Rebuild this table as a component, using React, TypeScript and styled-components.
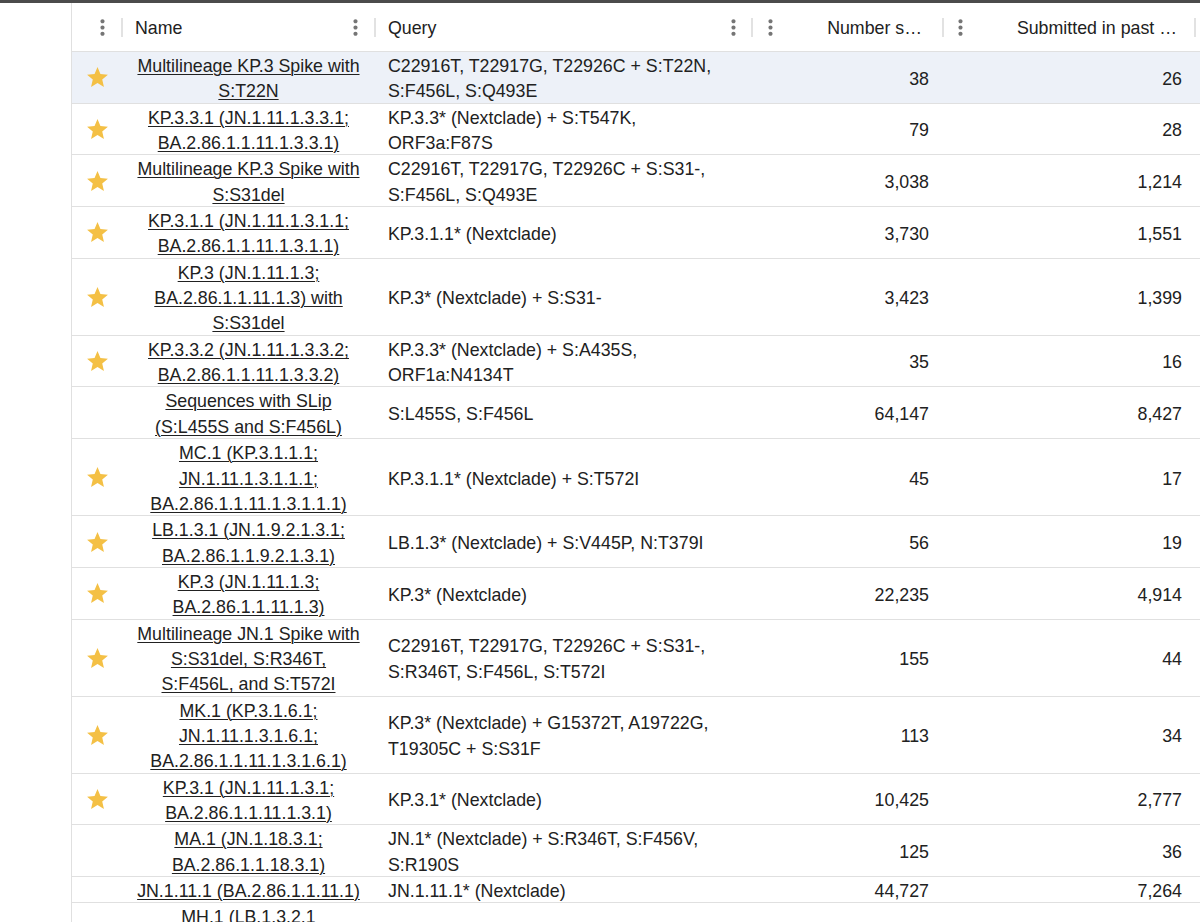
import React from "react";
import styled, { createGlobalStyle } from "styled-components";

const GlobalStyle = createGlobalStyle`
  html, body { margin: 0; padding: 0; background: #ffffff; }
  body {
    font-family: "Liberation Sans", Arial, Helvetica, sans-serif;
    color: #212121;
  }
  * { box-sizing: border-box; }
`;

const COLS = "50px 253px 377px 191px 252px 1fr";

const Page = styled.div`
  height: 100vh;
  display: flex;
  flex-direction: column;
  overflow: hidden;
`;

const TopBar = styled.div`
  height: 3px;
  flex-shrink: 0;
  background: #4b4b4b;
`;

const Content = styled.div`
  flex: 1;
  min-height: 0;
  display: flex;
  padding-left: 71px;
`;

const Grid = styled.div`
  flex: 1;
  min-width: 0;
  border-left: 1px solid #e0e0e0;
  overflow: hidden;
  display: flex;
  flex-direction: column;
  font-size: 17.8px;
`;

const HeaderRow = styled.div`
  display: grid;
  grid-template-columns: ${COLS};
  height: 49px;
  flex-shrink: 0;
  border-bottom: 1px solid #e0e0e0;
`;

const HeaderCell = styled.div<{ $padL?: number }>`
  display: flex;
  align-items: center;
  min-width: 0;
  padding-left: ${(p) => (p.$padL ?? 0)}px;
`;

const HeaderTitle = styled.span<{ $align: "left" | "right"; $gap?: number }>`
  flex: 1;
  min-width: 0;
  white-space: nowrap;
  overflow: hidden;
  color: #212121;
  padding-top: 2px;
  text-align: ${(p) => p.$align};
  margin-right: ${(p) => (p.$gap ?? 0)}px;
`;

const KebabBox = styled.span<{ $mr?: number }>`
  width: 25px;
  height: 25px;
  flex-shrink: 0;
  display: flex;
  align-items: center;
  justify-content: center;
  color: #757575;
  margin-right: ${(p) => (p.$mr ?? 0)}px;
`;

const Separator = styled.span`
  width: 2px;
  height: 19px;
  flex-shrink: 0;
  background: #e2e2e2;
  margin-right: -1px;
`;

const Row = styled.div<{ $selected?: boolean }>`
  display: grid;
  grid-template-columns: ${COLS};
  flex-shrink: 0;
  border-bottom: 1px solid #e0e0e0;
  background: ${(p) => (p.$selected ? "#edf1f8" : "#ffffff")};
  line-height: 25.35px;
`;

const StarCell = styled.div`
  display: flex;
  align-items: center;
  justify-content: center;
  padding-top: 1px;
`;

const NameCell = styled.div`
  display: flex;
  align-items: center;
  justify-content: center;
  text-align: center;
  padding: 0 6px;
  white-space: nowrap;
  overflow: hidden;
`;

const QueryCell = styled.div`
  display: flex;
  align-items: center;
  padding: 0 13px;
  white-space: nowrap;
  overflow: hidden;
`;

const NumCell = styled.div<{ $pr: number }>`
  display: flex;
  align-items: center;
  justify-content: flex-end;
  padding-right: ${(p) => p.$pr}px;
  white-space: nowrap;
`;

const CellText = styled.div`
  padding-top: 2px;
  margin-bottom: -2px;
`;

const NameLink = styled.a`
  color: #212121;
  text-decoration: underline;
  text-decoration-thickness: 1px;
  text-underline-offset: 2px;
  cursor: pointer;
`;

const Kebab = ({ mr }: { mr?: number }) => (
  <KebabBox $mr={mr}>
    <svg width="25" height="25" viewBox="0 0 24 24" fill="currentColor">
      <path d="M12 8c1.1 0 2-.9 2-2s-.9-2-2-2-2 .9-2 2 .9 2 2 2zm0 2c-1.1 0-2 .9-2 2s.9 2 2 2 2-.9 2-2-.9-2-2-2zm0 6c-1.1 0-2 .9-2 2s.9 2 2 2 2-.9 2-2-.9-2-2-2z" />
    </svg>
  </KebabBox>
);

const Star = () => (
  <svg width="25" height="25" viewBox="0 0 24 24" fill="#f4c045">
    <path d="M12 17.27 18.18 21l-1.64-7.03L22 9.24l-7.19-.61L12 2 9.19 8.63 2 9.24l5.46 4.73L5.82 21z" />
  </svg>
);

type Item = {
  star: boolean;
  name: string[];
  query: string[];
  num: string;
  past: string;
};

const rows: Item[] = [
  { star: true, name: ["Multilineage KP.3 Spike with", "S:T22N"], query: ["C22916T, T22917G, T22926C + S:T22N,", "S:F456L, S:Q493E"], num: "38", past: "26" },
  { star: true, name: ["KP.3.3.1 (JN.1.11.1.3.3.1;", "BA.2.86.1.1.11.1.3.3.1)"], query: ["KP.3.3* (Nextclade) + S:T547K,", "ORF3a:F87S"], num: "79", past: "28" },
  { star: true, name: ["Multilineage KP.3 Spike with", "S:S31del"], query: ["C22916T, T22917G, T22926C + S:S31-,", "S:F456L, S:Q493E"], num: "3,038", past: "1,214" },
  { star: true, name: ["KP.3.1.1 (JN.1.11.1.3.1.1;", "BA.2.86.1.1.11.1.3.1.1)"], query: ["KP.3.1.1* (Nextclade)"], num: "3,730", past: "1,551" },
  { star: true, name: ["KP.3 (JN.1.11.1.3;", "BA.2.86.1.1.11.1.3) with", "S:S31del"], query: ["KP.3* (Nextclade) + S:S31-"], num: "3,423", past: "1,399" },
  { star: true, name: ["KP.3.3.2 (JN.1.11.1.3.3.2;", "BA.2.86.1.1.11.1.3.3.2)"], query: ["KP.3.3* (Nextclade) + S:A435S,", "ORF1a:N4134T"], num: "35", past: "16" },
  { star: false, name: ["Sequences with SLip", "(S:L455S and S:F456L)"], query: ["S:L455S, S:F456L"], num: "64,147", past: "8,427" },
  { star: true, name: ["MC.1 (KP.3.1.1.1;", "JN.1.11.1.3.1.1.1;", "BA.2.86.1.1.11.1.3.1.1.1)"], query: ["KP.3.1.1* (Nextclade) + S:T572I"], num: "45", past: "17" },
  { star: true, name: ["LB.1.3.1 (JN.1.9.2.1.3.1;", "BA.2.86.1.1.9.2.1.3.1)"], query: ["LB.1.3* (Nextclade) + S:V445P, N:T379I"], num: "56", past: "19" },
  { star: true, name: ["KP.3 (JN.1.11.1.3;", "BA.2.86.1.1.11.1.3)"], query: ["KP.3* (Nextclade)"], num: "22,235", past: "4,914" },
  { star: true, name: ["Multilineage JN.1 Spike with", "S:S31del, S:R346T,", "S:F456L, and S:T572I"], query: ["C22916T, T22917G, T22926C + S:S31-,", "S:R346T, S:F456L, S:T572I"], num: "155", past: "44" },
  { star: true, name: ["MK.1 (KP.3.1.6.1;", "JN.1.11.1.3.1.6.1;", "BA.2.86.1.1.11.1.3.1.6.1)"], query: ["KP.3* (Nextclade) + G15372T, A19722G,", "T19305C + S:S31F"], num: "113", past: "34" },
  { star: true, name: ["KP.3.1 (JN.1.11.1.3.1;", "BA.2.86.1.1.11.1.3.1)"], query: ["KP.3.1* (Nextclade)"], num: "10,425", past: "2,777" },
  { star: false, name: ["MA.1 (JN.1.18.3.1;", "BA.2.86.1.1.18.3.1)"], query: ["JN.1* (Nextclade) + S:R346T, S:F456V,", "S:R190S"], num: "125", past: "36" },
  { star: false, name: ["JN.1.11.1 (BA.2.86.1.1.11.1)"], query: ["JN.1.11.1* (Nextclade)"], num: "44,727", past: "7,264" },
  { star: false, name: ["MH.1 (LB.1.3.2.1", "JN.1.9.2.1.3.2.1;", "BA.2.86.1.1.9.2.1.3.2.1)"], query: ["LB.1.3.2.1* (Nextclade)"], num: "1,062", past: "211" },
];

const Lines = ({ lines }: { lines: string[] }) => (
  <>
    {lines.map((l, i) => (
      <React.Fragment key={i}>
        {i > 0 && <br />}
        {l}
      </React.Fragment>
    ))}
  </>
);

export default function App() {
  return (
    <Page>
      <GlobalStyle />
      <TopBar />
      <Content>
        <Grid>
          <HeaderRow>
            <HeaderCell>
              <HeaderTitle $align="left" />
              <Kebab mr={6} />
              <Separator />
            </HeaderCell>
            <HeaderCell $padL={13}>
              <HeaderTitle $align="left">Name</HeaderTitle>
              <Kebab mr={6} />
              <Separator />
            </HeaderCell>
            <HeaderCell $padL={13}>
              <HeaderTitle $align="left">Query</HeaderTitle>
              <Kebab mr={5} />
              <Separator />
            </HeaderCell>
            <HeaderCell $padL={6}>
              <Kebab />
              <HeaderTitle $align="right" $gap={20}>Number s…</HeaderTitle>
              <Separator />
            </HeaderCell>
            <HeaderCell $padL={5}>
              <Kebab />
              <HeaderTitle $align="right" $gap={17}>Submitted in past …</HeaderTitle>
              <Separator />
            </HeaderCell>
            <div />
          </HeaderRow>
          {rows.map((r, i) => (
            <Row key={i} $selected={i === 0}>
              <StarCell>{r.star && <Star />}</StarCell>
              <NameCell>
                <CellText>
                  <NameLink>
                    <Lines lines={r.name} />
                  </NameLink>
                </CellText>
              </NameCell>
              <QueryCell>
                <CellText>
                  <Lines lines={r.query} />
                </CellText>
              </QueryCell>
              <NumCell $pr={14}>
                <CellText>{r.num}</CellText>
              </NumCell>
              <NumCell $pr={13}>
                <CellText>{r.past}</CellText>
              </NumCell>
              <div />
            </Row>
          ))}
        </Grid>
      </Content>
    </Page>
  );
}
